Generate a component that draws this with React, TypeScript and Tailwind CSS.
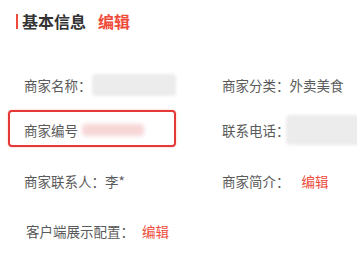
import React from 'react';

const font = { fontFamily: '"Noto Sans CJK SC", "Noto Sans", sans-serif' };

function Blur({ className }: { className: string }) {
  return <span className={`inline-block shrink-0 rounded-sm bg-[#ececec] blur-[1.5px] ${className}`} />;
}

function Edit({ className = '' }: { className?: string }) {
  return <span className={`text-[#ee4b3b] ${className}`}>编辑</span>;
}

export default function App() {
  return (
    <div className="relative h-[273px] w-[357px] overflow-hidden whitespace-nowrap bg-white text-[13.5px] text-[#5a5a5a]" style={font}>
      <div className="flex items-center pl-4 pt-[11px]">
        <span className="h-[15px] w-[2px] bg-[#ee4b3b]" />
        <span className="ml-1 text-[16px] font-bold leading-5 text-[#333]">基本信息</span>
        <span className="ml-3 text-[16px] font-bold leading-5 text-[#f04b3a]">编辑</span>
      </div>

      <div className="mt-[43px] grid grid-cols-[198px_1fr] pl-6">
        <div className="flex h-[22px] items-center">
          <span>商家名称：</span>
          <Blur className="ml-0 h-[22px] w-[84px]" />
        </div>
        <div className="flex h-[22px] items-center">商家分类：外卖美食</div>

        <div className="relative mt-[23px] flex h-[22px] items-center">
          <span>商家编号</span>
          <span className="ml-1 h-[12px] w-[62px] shrink-0 rounded-sm bg-[#f7d6d6] blur-[2px]" />
          <div className="absolute -left-4 top-[-9px] h-[37px] w-[168px] rounded-[4px] border-2 border-[#e53935] shadow-[0_0_2px_rgba(229,57,53,0.4)]" />
        </div>
        <div className="mt-[23px] flex h-[22px] items-center">
          <span className="shrink-0">联系电话：</span>
          <Blur className="-ml-1 h-[30px] w-[80px]" />
        </div>

        <div className="mt-[29px] flex h-[22px] items-center">商家联系人：李*</div>
        <div className="mt-[29px] flex h-[22px] items-center">
          <span>商家简介：</span>
          <Edit className="ml-3" />
        </div>

        <div className="col-span-2 mt-[28px] flex h-[22px] items-center pl-[2px]">
          <span>客户端展示配置：</span>
          <Edit className="ml-2" />
        </div>
      </div>
    </div>
  );
}
